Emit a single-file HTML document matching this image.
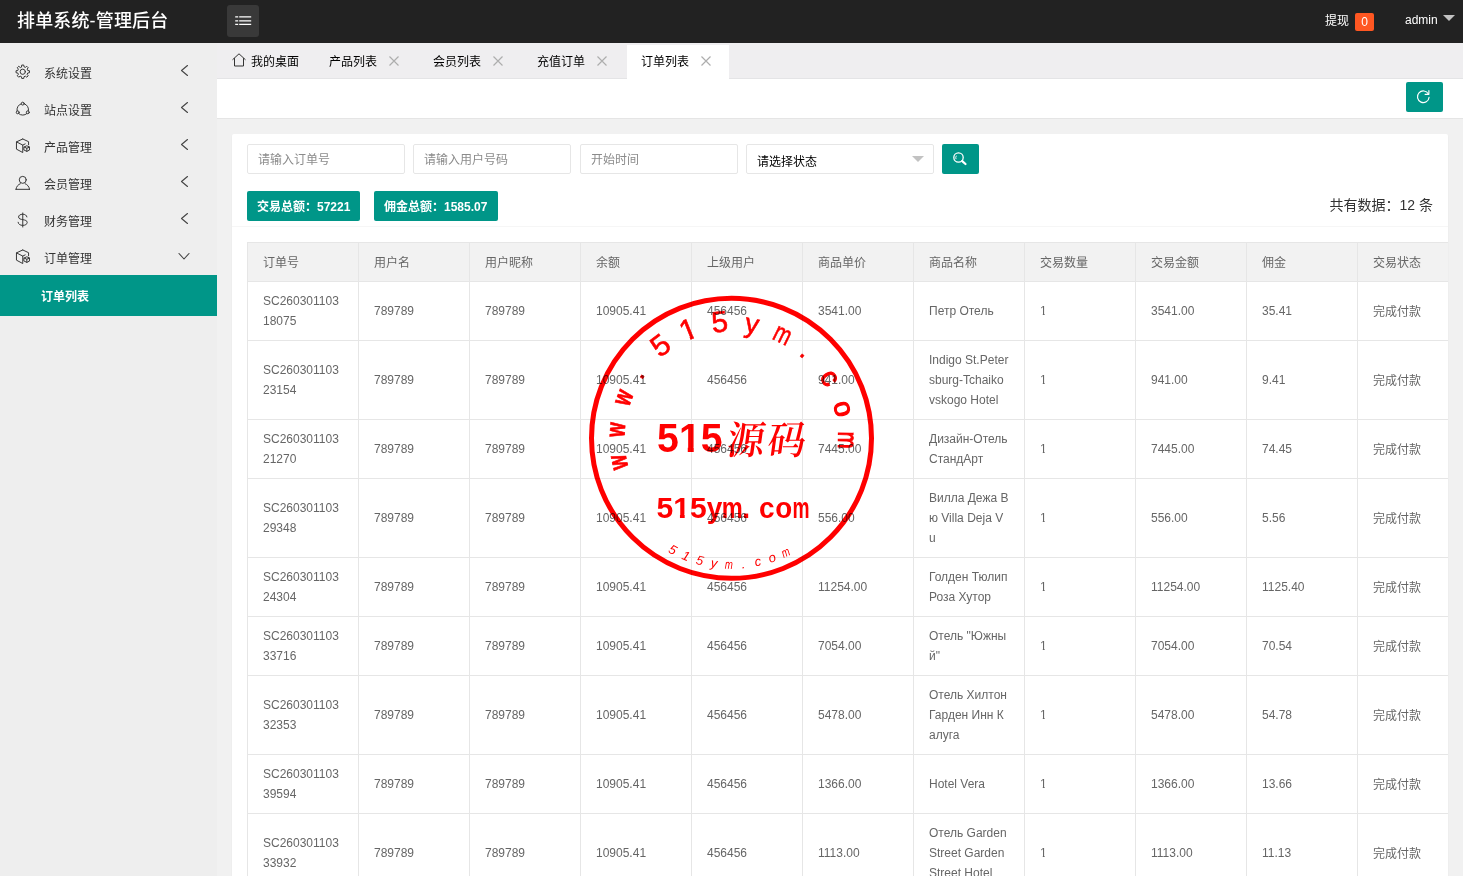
<!DOCTYPE html>
<html lang="zh-CN">
<head>
<meta charset="utf-8">
<title>排单系统-管理后台</title>
<style>
*{box-sizing:border-box;margin:0;padding:0}
html,body{width:1463px;height:876px;overflow:hidden}
body{font-family:"Liberation Sans","Noto Sans CJK SC",sans-serif;font-size:12px;color:#666;background:#f1f1f1;position:relative}
a{color:inherit;text-decoration:none}
/* header */
.hd{position:absolute;left:0;top:0;width:1463px;height:43px;background:#222;color:#fff}
.logo{position:absolute;left:17px;top:2px;height:40px;line-height:38px;font-size:18px;color:#fff;white-space:nowrap;font-weight:500;letter-spacing:0.15px}
.tog{position:absolute;left:227px;top:5px;width:32px;height:32px;background:#393939;border-radius:3px}
.tog i{position:absolute;left:8px;width:16px;height:1.300px;background:#fff}
.tog i:before{content:"";position:absolute;left:0;top:0;width:1px;height:2px;background:#393939;margin-left:3px}
.hr1{position:absolute;left:1325px;top:2px;height:40px;line-height:38px;font-size:12px;color:#fff}
.badge{position:absolute;left:1355px;top:13px;width:19px;height:18px;line-height:19px;background:#ff5722;border-radius:2px;color:#fff;font-size:12px;text-align:center}
.adm{position:absolute;left:1405px;top:0.500px;height:40px;line-height:38px;font-size:12px;color:#fff}
.caret{position:absolute;left:1443px;top:15px;width:0;height:0;border:6px solid transparent;border-top-color:#c2c2c2;border-bottom-width:0}
/* sidebar */
.sb{position:absolute;left:0;top:43px;width:217px;height:833px;background:#eee}
.mi{position:absolute;left:0;width:217px;height:37px;color:#333;font-size:12px}
.mi svg.ic{position:absolute;left:15px;top:10px;width:15.500px;height:15.500px}
.mi span{position:absolute;left:44px;top:2px;line-height:37px}
.mi svg.ch{position:absolute;left:177.500px;top:10px;width:12px;height:14px}
.act{position:absolute;left:0;top:232px;width:217px;height:41px;background:#009688;color:#fff;font-size:12px;line-height:45px;padding-left:41px;font-weight:bold}
/* tabs */
.tabs{position:absolute;left:217px;top:43px;width:1246px;height:36px;background:#efeef0;border-bottom:1px solid #e4e4e6}
.tab{position:absolute;top:0;height:35px;line-height:38px;font-size:12px;color:#000;white-space:nowrap}
.tab .x{position:absolute;top:12.500px;width:10px;height:10px}
.tab.on{background:#fff;top:2px;height:34px;line-height:34px}
.tab.on .x{top:10.500px}
.nav{position:absolute;left:217px;top:79px;width:1246px;height:40px;background:#fff;border-bottom:1px solid #e5e5e5}
.rf{position:absolute;left:1406px;top:82px;width:37px;height:30px;background:#009688;border-radius:2px}
/* card */
.card{position:absolute;left:232px;top:134px;width:1216px;height:760px;background:#fff;border-radius:2px;overflow:hidden;box-shadow:0 1px 2px 0 rgba(0,0,0,.05)}
.inp{position:absolute;top:10px;height:30px;border:1px solid #e6e6e6;border-radius:2px;background:#fff;color:#8b8b8b;font-size:12px;line-height:30px;padding-left:10px}
.sel{color:#000;line-height:34px}
.sel:after{content:"";position:absolute;right:9px;top:11px;border:6px solid transparent;border-top-color:#c2c2c2;border-bottom-width:0}
.btn{position:absolute;height:30px;line-height:32px;background:#009688;color:#fff;border-radius:2px;font-size:12px;font-weight:bold;padding:0 10px;white-space:nowrap}
.cnt{position:absolute;right:15px;top:56px;line-height:30px;font-size:14px;color:#333}
.line{position:absolute;left:0;top:92px;width:1216px;height:1px;background:#f6f6f6}
.tw{position:absolute;left:15px;top:108px;width:1201px;overflow:hidden}
table{border-collapse:collapse;border-spacing:0;table-layout:fixed;width:1221px;color:#666}
th,td{width:111px;border:1px solid #e6e6e6;padding:9px 15px;line-height:20px;font-size:12px;text-align:left;font-weight:normal;word-break:break-all;vertical-align:middle}
th{background:#f2f2f2;padding-top:10px;padding-bottom:8px}
td.cj{padding-top:10px;padding-bottom:8px}
td.one span{display:inline-block;clip-path:polygon(0 0,100% 0,100% 13px,4.600px 13px,4.600px 100%,2.800px 100%,2.800px 13px,0 13px)}
.stamp{position:absolute;left:582px;top:288px;width:300px;height:300px}
</style>
</head>
<body>
<div class="hd">
  <div class="logo">排单系统-管理后台</div>
  <div class="tog"><svg style="position:absolute;left:0;top:0;width:32px;height:32px" viewBox="0 0 32 32" stroke="#fff" stroke-width="1.1" fill="none"><path d="M8.200 11.900h3M12.200 11.900h12M8.200 15.900h3M12.200 15.900h12M8.200 19.400h3M12.200 19.400h12"/></svg></div>
  <div class="hr1">提现</div><div class="badge">0</div>
  <div class="adm">admin</div><div class="caret"></div>
</div>
<div class="sb" id="sb">
<div class="mi" style="top:11px"><svg class="ic" viewBox="0 0 16 16" stroke="#333" stroke-width="1" fill="none" stroke-linecap="round" stroke-linejoin="round"><circle cx="8" cy="8" r="2.700"/><path d="M6.72 2.86L6.97 1.08L9.03 1.08L9.28 2.86L10.73 3.46L12.16 2.37L13.63 3.84L12.54 5.27L13.14 6.72L14.92 6.97L14.92 9.03L13.14 9.28L12.54 10.73L13.63 12.16L12.16 13.63L10.73 12.54L9.28 13.14L9.03 14.92L6.97 14.92L6.72 13.14L5.27 12.54L3.84 13.63L2.37 12.16L3.46 10.73L2.86 9.28L1.08 9.03L1.08 6.97L2.86 6.72L3.46 5.27L2.37 3.84L3.84 2.37L5.27 3.46Z"/></svg><span>系统设置</span><svg class="ch" viewBox="0 0 12 14" fill="none" stroke="#444" stroke-width="1.1" stroke-linecap="round" stroke-linejoin="round"><path d="M9.500 1.500L3.500 6.500l6 5"/></svg></div>
<div class="mi" style="top:48px"><svg class="ic" viewBox="0 0 16 16" stroke="#333" stroke-width="1" fill="none" stroke-linecap="round" stroke-linejoin="round"><circle cx="8.00" cy="2.70" r="1.5"/><circle cx="13.20" cy="11.70" r="1.5"/><circle cx="2.80" cy="11.70" r="1.5"/><path d="M9.69 2.94A6.0 6.0 0 0 1 13.83 10.12M12.14 13.04A6.0 6.0 0 0 1 3.86 13.04M2.17 10.12A6.0 6.0 0 0 1 6.31 2.94"/></svg><span>站点设置</span><svg class="ch" viewBox="0 0 12 14" fill="none" stroke="#444" stroke-width="1.1" stroke-linecap="round" stroke-linejoin="round"><path d="M9.500 1.500L3.500 6.500l6 5"/></svg></div>
<div class="mi" style="top:85px"><svg class="ic" viewBox="0 0 16 16" stroke="#333" stroke-width="1" fill="none" stroke-linecap="round" stroke-linejoin="round"><path d="M8 1L1.500 4v7.500L8 15V7.300L1.500 4M8 1l6 2.800V7M8 7.300l2.500-1.200"/><path d="M9.500 9.300l2.700-1.300 2.700 1.300v3.200l-2.700 1.300-2.700-1.300zM9.500 9.300l2.700 1.300 2.700-1.300M12.200 10.600v3.200"/></svg><span>产品管理</span><svg class="ch" viewBox="0 0 12 14" fill="none" stroke="#444" stroke-width="1.1" stroke-linecap="round" stroke-linejoin="round"><path d="M9.500 1.500L3.500 6.500l6 5"/></svg></div>
<div class="mi" style="top:122px"><svg class="ic" viewBox="0 0 16 16" stroke="#333" stroke-width="1" fill="none" stroke-linecap="round" stroke-linejoin="round"><circle cx="8" cy="5" r="3.600"/><path d="M1 14.800c.4-3 2.300-5 4.500-5.800M15 14.800c-.4-3-2.300-5-4.500-5.800M1 14.800h14"/></svg><span>会员管理</span><svg class="ch" viewBox="0 0 12 14" fill="none" stroke="#444" stroke-width="1.1" stroke-linecap="round" stroke-linejoin="round"><path d="M9.500 1.500L3.500 6.500l6 5"/></svg></div>
<div class="mi" style="top:159px"><svg class="ic" viewBox="0 0 16 16" stroke="#333" stroke-width="1" fill="none" stroke-linecap="round" stroke-linejoin="round"><path d="M12.300 5.100C12 3.300 10.300 2.300 8 2.300c-2.500 0-4.300 1.100-4.300 2.900C3.700 9 12.600 6.800 12.600 10.800c0 1.800-2 3-4.600 3-2.700 0-4.600-1.200-4.800-3.200M8 1v14.500"/></svg><span>财务管理</span><svg class="ch" viewBox="0 0 12 14" fill="none" stroke="#444" stroke-width="1.1" stroke-linecap="round" stroke-linejoin="round"><path d="M9.500 1.500L3.500 6.500l6 5"/></svg></div>
<div class="mi" style="top:196px"><svg class="ic" viewBox="0 0 16 16" stroke="#333" stroke-width="1" fill="none" stroke-linecap="round" stroke-linejoin="round"><path d="M8 1L1.500 4v7.500L8 15V7.300L1.500 4M8 1l6 2.800V7M8 7.300l2.500-1.200"/><path d="M9.500 9.300l2.700-1.300 2.700 1.300v3.200l-2.700 1.300-2.700-1.300zM9.500 9.300l2.700 1.300 2.700-1.300M12.200 10.600v3.200"/></svg><span>订单管理</span><svg class="ch" viewBox="0 0 12 14" fill="none" stroke="#444" stroke-width="1.1" stroke-linecap="round" stroke-linejoin="round"><path d="M1 4.500l5 5.500 5-5.500"/></svg></div>
<div class="act">订单列表</div>
</div>
<div class="tabs" id="tabs">
<div class="tab" style="left:0;width:96px"><svg style="position:absolute;left:15px;top:9.500px;width:14px;height:14px" viewBox="0 0 14 14" fill="none" stroke="#333" stroke-width="1" stroke-linejoin="round" stroke-linecap="round"><path d="M0.800 6.500L7 0.800l6.200 5.700M2.500 5.500v7.500h9V5.500"/></svg><span style="position:absolute;left:34px">我的桌面</span></div>
<div class="tab" style="left:112px">产品列表<svg class="x" style="left:60px" viewBox="0 0 10 10" stroke="#adadad" stroke-width="1.150" fill="none"><path d="M0.500 0.500l9 9M9.500 0.500l-9 9"/></svg></div>
<div class="tab" style="left:216px">会员列表<svg class="x" style="left:60px" viewBox="0 0 10 10" stroke="#adadad" stroke-width="1.150" fill="none"><path d="M0.500 0.500l9 9M9.500 0.500l-9 9"/></svg></div>
<div class="tab" style="left:320px">充值订单<svg class="x" style="left:60px" viewBox="0 0 10 10" stroke="#adadad" stroke-width="1.150" fill="none"><path d="M0.500 0.500l9 9M9.500 0.500l-9 9"/></svg></div>
<div class="tab on" style="left:410px;width:102px;padding-left:14px">订单列表<svg class="x" style="left:74px" viewBox="0 0 10 10" stroke="#adadad" stroke-width="1.150" fill="none"><path d="M0.500 0.500l9 9M9.500 0.500l-9 9"/></svg></div>
</div>
<div class="nav"></div>
<div class="rf"><svg style="position:absolute;left:8.800px;top:6.200px;width:16.500px;height:16.500px" viewBox="0 0 17 17" fill="none" stroke="#fff" stroke-width="1.2" stroke-linecap="round" stroke-linejoin="round"><path d="M13.800 6.200A6 6 0 1 0 14.500 9.500"/><path d="M14.300 2.600v3.900h-3.900"/></svg></div>
<div class="card" id="card">
<div class="inp" style="left:15px;width:158px">请输入订单号</div>
<div class="inp" style="left:181px;width:158px">请输入用户号码</div>
<div class="inp" style="left:348px;width:158px">开始时间</div>
<div class="inp sel" style="left:514px;width:188px">请选择状态</div>
<div class="btn" style="left:710px;top:10px;width:37px;padding:0"><svg style="position:absolute;left:10.100px;top:6.800px;width:16px;height:16px" viewBox="0 0 16 16" fill="none" stroke="#fff" stroke-width="1.300" stroke-linecap="round"><circle cx="6.500" cy="6.500" r="4.700"/><path d="M10.200 10.100l3.300 2.900" stroke-width="2.200"/><path d="M3.900 7.800a2.800 2.800 0 0 1 0.300-2.800" stroke-width="0.900"/></svg></div>
<div class="btn" style="left:15px;top:57px;width:113px">交易总额：57221</div>
<div class="btn" style="left:142px;top:57px;width:124px">佣金总额：1585.07</div>
<div class="cnt">共有数据：12 条</div>
<div class="line"></div>
<div class="tw"><table><thead><tr><th>订单号</th><th>用户名</th><th>用户昵称</th><th>余额</th><th>上级用户</th><th>商品单价</th><th>商品名称</th><th>交易数量</th><th>交易金额</th><th>佣金</th><th>交易状态</th></tr></thead><tbody>
<tr><td>SC26030110318075</td><td>789789</td><td>789789</td><td>10905.41</td><td>456456</td><td>3541.00</td><td>Петр Отель</td><td class="one"><span>1</span></td><td>3541.00</td><td>35.41</td><td class="cj">完成付款</td></tr>
<tr><td>SC26030110323154</td><td>789789</td><td>789789</td><td>10905.41</td><td>456456</td><td>941.00</td><td>Indigo St.Petersburg-Tchaikovskogo Hotel</td><td class="one"><span>1</span></td><td>941.00</td><td>9.41</td><td class="cj">完成付款</td></tr>
<tr><td>SC26030110321270</td><td>789789</td><td>789789</td><td>10905.41</td><td>456456</td><td>7445.00</td><td>Дизайн-Отель СтандАрт</td><td class="one"><span>1</span></td><td>7445.00</td><td>74.45</td><td class="cj">完成付款</td></tr>
<tr><td>SC26030110329348</td><td>789789</td><td>789789</td><td>10905.41</td><td>456456</td><td>556.00</td><td>Вилла Дежа Вю Villa Deja Vu</td><td class="one"><span>1</span></td><td>556.00</td><td>5.56</td><td class="cj">完成付款</td></tr>
<tr><td>SC26030110324304</td><td>789789</td><td>789789</td><td>10905.41</td><td>456456</td><td>11254.00</td><td>Голден Тюлип Роза Хутор</td><td class="one"><span>1</span></td><td>11254.00</td><td>1125.40</td><td class="cj">完成付款</td></tr>
<tr><td>SC26030110333716</td><td>789789</td><td>789789</td><td>10905.41</td><td>456456</td><td>7054.00</td><td>Отель "Южный"</td><td class="one"><span>1</span></td><td>7054.00</td><td>70.54</td><td class="cj">完成付款</td></tr>
<tr><td>SC26030110332353</td><td>789789</td><td>789789</td><td>10905.41</td><td>456456</td><td>5478.00</td><td>Отель Хилтон Гарден Инн Калуга</td><td class="one"><span>1</span></td><td>5478.00</td><td>54.78</td><td class="cj">完成付款</td></tr>
<tr><td>SC26030110339594</td><td>789789</td><td>789789</td><td>10905.41</td><td>456456</td><td>1366.00</td><td>Hotel Vera</td><td class="one"><span>1</span></td><td>1366.00</td><td>13.66</td><td class="cj">完成付款</td></tr>
<tr><td>SC26030110333932</td><td>789789</td><td>789789</td><td>10905.41</td><td>456456</td><td>1113.00</td><td>Отель Garden Street Garden Street Hotel</td><td class="one"><span>1</span></td><td>1113.00</td><td>11.13</td><td class="cj">完成付款</td></tr>
</tbody></table></div>
</div>
<!--stamp--><svg class="stamp" viewBox="582 288 300 300" style="mix-blend-mode:multiply">
<defs><clipPath id="c1"><path d="M-29.5 -35.4H29.5V-3.30H2.42V8.8H-1.39V-3.30H-29.5Z"/></clipPath><clipPath id="c2"><path d="M-40.5 -48.6H40.5V-4.93H4.05V12.2H-2.11V-4.93H-40.5Z"/></clipPath><clipPath id="c3"><path d="M-29.5 -35.4H29.5V-3.81H3.03V8.8H-1.62V-3.81H-29.5Z"/></clipPath></defs>
<g fill="#f00" stroke="#f00" stroke-width="0" font-family="'Liberation Sans','Noto Sans CJK SC',sans-serif">
<circle cx="731.5" cy="438.3" r="140" fill="none" stroke-width="5"/>
<text transform="translate(731.5,438.3) rotate(-102.0) translate(0,-107) scale(0.67,1)" text-anchor="middle" font-size="27.5" font-weight="bold" stroke-width="0.8">w</text>
<text transform="translate(731.5,438.3) rotate(-85.8) translate(0,-107) scale(0.67,1)" text-anchor="middle" font-size="27.5" font-weight="bold" stroke-width="0.8">w</text>
<text transform="translate(731.5,438.3) rotate(-69.4) translate(0,-107) scale(0.67,1)" text-anchor="middle" font-size="27.5" font-weight="bold" stroke-width="0.8">w</text>
<text transform="translate(731.5,438.3) rotate(-55.4) translate(0,-107) scale(1.00,1)" text-anchor="middle" font-size="27.5" font-weight="normal" stroke-width="0.6">.</text>
<text transform="translate(731.5,438.3) rotate(-37.4) translate(0,-107) scale(1.00,1)" text-anchor="middle" font-size="29.5" font-weight="normal" stroke-width="0.6">5</text>
<text transform="translate(731.5,438.3) rotate(-21.8) translate(0,-107) scale(1.00,1)" text-anchor="middle" font-size="29.5" font-weight="normal" stroke-width="0.6" clip-path="url(#c1)">1</text>
<text transform="translate(731.5,438.3) rotate(-5.8) translate(0,-107) scale(1.00,1)" text-anchor="middle" font-size="29.5" font-weight="normal" stroke-width="0.6">5</text>
<text transform="translate(731.5,438.3) rotate(10.3) translate(0,-107) scale(1.00,1)" text-anchor="middle" font-size="27.5" font-weight="normal" stroke-width="0.6">y</text>
<text transform="translate(731.5,438.3) rotate(26.3) translate(0,-107) scale(0.74,1)" text-anchor="middle" font-size="27.5" font-weight="normal" stroke-width="0.6">m</text>
<text transform="translate(731.5,438.3) rotate(40.6) translate(0,-107) scale(1.00,1)" text-anchor="middle" font-size="27.5" font-weight="normal" stroke-width="0.6">.</text>
<text transform="translate(731.5,438.3) rotate(58.4) translate(0,-107) scale(1.00,1)" text-anchor="middle" font-size="27.5" font-weight="normal" stroke-width="1.2">c</text>
<text transform="translate(731.5,438.3) rotate(75.2) translate(0,-107) scale(1.00,1)" text-anchor="middle" font-size="27.5" font-weight="normal" stroke-width="1.2">o</text>
<text transform="translate(731.5,438.3) rotate(90.9) translate(0,-107) scale(0.74,1)" text-anchor="middle" font-size="27.5" font-weight="normal" stroke-width="1.2">m</text>
<text transform="translate(667.9,452) scale(0.97,1)" text-anchor="middle" font-size="40.5" font-weight="bold">5</text>
<text transform="translate(689.8,452) scale(0.97,1)" text-anchor="middle" font-size="40.5" font-weight="bold" clip-path="url(#c2)">1</text>
<text transform="translate(711.6,452) scale(0.97,1)" text-anchor="middle" font-size="40.5" font-weight="bold">5</text>
<text transform="translate(725.500,453.500) skewX(-8) scale(0.97,1)" font-size="39" font-weight="600" font-family="'Noto Serif CJK SC',serif" letter-spacing="3">源码</text>
<text transform="translate(664.9,518) scale(1.02,1)" text-anchor="middle" font-size="29.5" font-weight="bold">5</text>
<text transform="translate(681.6,518) scale(1.02,1)" text-anchor="middle" font-size="29.5" font-weight="bold" clip-path="url(#c3)">1</text>
<text transform="translate(698.3,518) scale(1.02,1)" text-anchor="middle" font-size="29.5" font-weight="bold">5</text>
<text transform="translate(714.5,518) scale(0.95,1)" text-anchor="middle" font-size="29.5" font-weight="bold">y</text>
<text transform="translate(732.2,518) scale(0.80,1)" text-anchor="middle" font-size="29.5" font-weight="bold">m</text>
<text transform="translate(746.0,518) scale(1.00,1)" text-anchor="middle" font-size="29.5" font-weight="bold">.</text>
<text transform="translate(766.7,518) scale(0.95,1)" text-anchor="middle" font-size="29.5" font-weight="bold">c</text>
<text transform="translate(783.6,518) scale(0.94,1)" text-anchor="middle" font-size="29.5" font-weight="bold">o</text>
<text transform="translate(801.0,518) scale(0.65,1)" text-anchor="middle" font-size="29.5" font-weight="bold">m</text>
<text transform="translate(731.5,438.3) rotate(27.8) translate(0,130.500) scale(1.00,1)" text-anchor="middle" font-size="13" font-style="italic">5</text>
<text transform="translate(731.5,438.3) rotate(21.2) translate(0,130.500) scale(1.00,1)" text-anchor="middle" font-size="13" font-style="italic">1</text>
<text transform="translate(731.5,438.3) rotate(14.5) translate(0,130.500) scale(1.00,1)" text-anchor="middle" font-size="13" font-style="italic">5</text>
<text transform="translate(731.5,438.3) rotate(7.9) translate(0,130.500) scale(1.00,1)" text-anchor="middle" font-size="13" font-style="italic">y</text>
<text transform="translate(731.5,438.3) rotate(1.2) translate(0,130.500) scale(0.74,1)" text-anchor="middle" font-size="13" font-style="italic">m</text>
<text transform="translate(731.5,438.3) rotate(-5.4) translate(0,130.500) scale(1.00,1)" text-anchor="middle" font-size="13" font-style="italic">.</text>
<text transform="translate(731.5,438.3) rotate(-12.0) translate(0,130.500) scale(1.00,1)" text-anchor="middle" font-size="13" font-style="italic">c</text>
<text transform="translate(731.5,438.3) rotate(-18.7) translate(0,130.500) scale(1.00,1)" text-anchor="middle" font-size="13" font-style="italic">o</text>
<text transform="translate(731.5,438.3) rotate(-25.3) translate(0,130.500) scale(0.74,1)" text-anchor="middle" font-size="13" font-style="italic">m</text>
</g></svg><!--/stamp-->
</body>
</html>
